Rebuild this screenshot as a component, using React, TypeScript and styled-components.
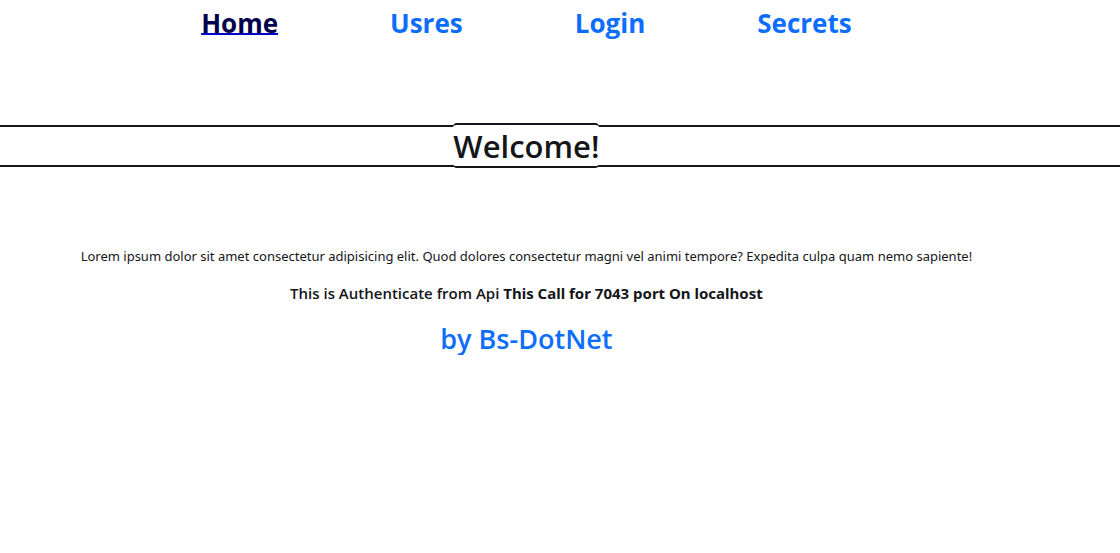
import React from "react";
import styled, { createGlobalStyle } from "styled-components";

const GlobalStyle = createGlobalStyle`
  *, *::before, *::after { box-sizing: border-box; }
  body {
    margin: 0;
    background: #fff;
    color: #141619;
    font-family: "Segoe UI", "Open Sans", "Noto Sans", sans-serif;
    font-size: 14px;
    line-height: 20px;
  }
`;

const Nav = styled.nav`
  display: flex;
  justify-content: center;
  gap: 112px;
  height: 48px;
  padding-right: 6%;
  padding-bottom: 2px;
  align-items: center;
`;

const NavLink = styled.a<{ $active?: boolean }>`
  font-size: 26px;
  line-height: 40px;
  font-weight: 700;
  color: ${(p) => (p.$active ? "#00004d" : "#0d6efd")};
  text-decoration: ${(p) => (p.$active ? "underline 2px #0000cd" : "none")};
  text-decoration-skip-ink: none;
  text-underline-offset: 0;
`;

const Band = styled.header`
  display: flex;
  justify-content: center;
  align-items: center;
  height: 42px;
  margin-top: 77px;
  padding-right: 6%;
  border: solid #141619;
  border-width: 2px 0;
`;

const Title = styled.h1`
  margin: 0 0 1px;
  padding-top: 2px;
  background: #fff;
  border: solid #141619;
  border-width: 2px 0;
  border-radius: 4px;
  font-size: 31px;
  line-height: 39px;
  font-weight: 600;
`;

const Main = styled.main`
  padding: 79px 6% 0 0;
  text-align: center;
`;

const Lead = styled.p`
  margin: 0 0 17px;
  font-family: "Segoe UI", "Noto Sans", sans-serif;
  font-size: 13px;
`;

const Notice = styled.p`
  margin: 0 0 20px;
  font-size: 15px;
  font-weight: 600;
`;

const Endpoint = styled.strong`
  font-family: "Segoe UI", "Noto Sans", sans-serif;
  font-weight: 700;
`;

const Author = styled.a`
  font-size: 27px;
  line-height: 32px;
  font-weight: 600;
  color: #0d6efd;
  text-decoration: none;
`;

const links = ["Home", "Usres", "Login", "Secrets"];

export default function App() {
  return (
    <>
      <GlobalStyle />
      <Nav>
        {links.map((label) => (
          <NavLink key={label} href={`#${label.toLowerCase()}`} $active={label === "Home"}>
            {label}
          </NavLink>
        ))}
      </Nav>
      <Band>
        <Title>Welcome!</Title>
      </Band>
      <Main>
        <Lead>
          Lorem ipsum dolor sit amet consectetur adipisicing elit. Quod dolores consectetur magni
          vel animi tempore? Expedita culpa quam nemo sapiente!
        </Lead>
        <Notice>
          This is Authenticate from Api <Endpoint>This Call for 7043 port On localhost</Endpoint>
        </Notice>
        <Author href="#author">by Bs-DotNet</Author>
      </Main>
    </>
  );
}
